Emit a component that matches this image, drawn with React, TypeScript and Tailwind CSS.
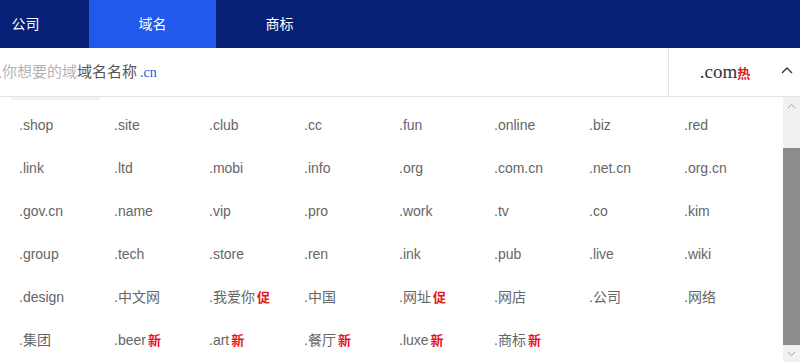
import React from 'react';

// Domain suffix picker: top tabs, search input, suffix dropdown grid

type Suffix = { name: string; tag?: '促' | '新' };

const tabs = ['公司', '域名', '商标'];

const suffixes: Suffix[] = [
  { name: '.shop' }, { name: '.site' }, { name: '.club' }, { name: '.cc' },
  { name: '.fun' }, { name: '.online' }, { name: '.biz' }, { name: '.red' },
  { name: '.link' }, { name: '.ltd' }, { name: '.mobi' }, { name: '.info' },
  { name: '.org' }, { name: '.com.cn' }, { name: '.net.cn' }, { name: '.org.cn' },
  { name: '.gov.cn' }, { name: '.name' }, { name: '.vip' }, { name: '.pro' },
  { name: '.work' }, { name: '.tv' }, { name: '.co' }, { name: '.kim' },
  { name: '.group' }, { name: '.tech' }, { name: '.store' }, { name: '.ren' },
  { name: '.ink' }, { name: '.pub' }, { name: '.live' }, { name: '.wiki' },
  { name: '.design' }, { name: '.中文网' }, { name: '.我爱你', tag: '促' }, { name: '.中国' },
  { name: '.网址', tag: '促' }, { name: '.网店' }, { name: '.公司' }, { name: '.网络' },
  { name: '.集团' }, { name: '.beer', tag: '新' }, { name: '.art', tag: '新' }, { name: '.餐厅', tag: '新' },
  { name: '.luxe', tag: '新' }, { name: '.商标', tag: '新' },
];

function Chevron({ up = true, className = '' }: { up?: boolean; className?: string }) {
  return (
    <svg width="12" height="8" viewBox="0 0 12 8" className={className}>
      <path
        d={up ? 'M1 7 L6 2 L11 7' : 'M1 1 L6 6 L11 1'}
        fill="none"
        stroke="currentColor"
        strokeWidth="1.3"
      />
    </svg>
  );
}

export default function App() {
  return (
    <div
      className="w-[800px] h-[362px] overflow-hidden bg-white"
      style={{ fontFamily: '"Liberation Sans", "Noto Sans CJK SC", sans-serif' }}
    >
      {/* Top tabs */}
      <div className="h-[48px] bg-[#072078] flex overflow-hidden">
        <div className="flex -ml-[38px]">
          {tabs.map((t, i) => (
            <div
              key={t}
              className={`w-[127px] h-[48px] flex items-center justify-center text-[14px] text-white ${
                i === 1 ? 'bg-[#2159ec]' : ''
              }`}
            >
              {t}
            </div>
          ))}
        </div>
      </div>

      {/* Search input row */}
      <div className="h-[49px] flex border-b border-[#e3e3e3]">
        <div className="flex-1 flex items-center overflow-hidden">
          <div className="flex items-baseline whitespace-nowrap -ml-[13px] text-[15px]">
            <span className="text-[#b4b4b4]">入你想要的域</span>
            <span className="text-[#555]">域名名称</span>
            <span
              className="ml-[3px] text-[14px] text-[#2a5bd6]"
              style={{ fontFamily: '"Liberation Serif", serif' }}
            >
              .cn
            </span>
          </div>
        </div>
        <div className="w-[132px] flex items-center border-l border-[#e6e6e6]">
          <div className="w-[112px] flex items-baseline justify-center">
            <span
              className="text-[19px] text-[#333]"
              style={{ fontFamily: '"Liberation Serif", serif' }}
            >
              .com
            </span>
            <span className="text-[13px] font-bold text-[#e8141b]">热</span>
          </div>
          <Chevron className="text-[#333] -mt-[4px]" />
        </div>
      </div>

      {/* Dropdown panel */}
      <div className="h-[265px] flex">
        <div className="flex-1 flex flex-col">
          <div className="ml-[11px] w-[89px] h-[6px] bg-[#f0f1f6]" />
          <div className="mt-[4px] pl-[19px] grid grid-cols-[repeat(8,95px)]">
            {suffixes.map((s) => (
              <div key={s.name} className="h-[43px] flex items-center text-[14px] text-[#666] whitespace-nowrap">
                <span>{s.name}</span>
                {s.tag && (
                  <span className="ml-[2px] text-[13px] font-bold text-[#e8141b]">{s.tag}</span>
                )}
              </div>
            ))}
          </div>
        </div>

        {/* Scrollbar */}
        <div className="w-[17px] flex flex-col bg-[#f1f1f1]">
          <div className="h-[17px] flex items-center justify-center text-[#a3a3a3]">
            <Chevron className="w-[9px] h-[6px]" />
          </div>
          <div className="h-[34px]" />
          <div className="flex-1 bg-[#8c8c8c]" />
          <div className="h-[17px] flex items-center justify-center text-[#a3a3a3]">
            <Chevron up={false} className="w-[9px] h-[6px]" />
          </div>
        </div>
      </div>
    </div>
  );
}
